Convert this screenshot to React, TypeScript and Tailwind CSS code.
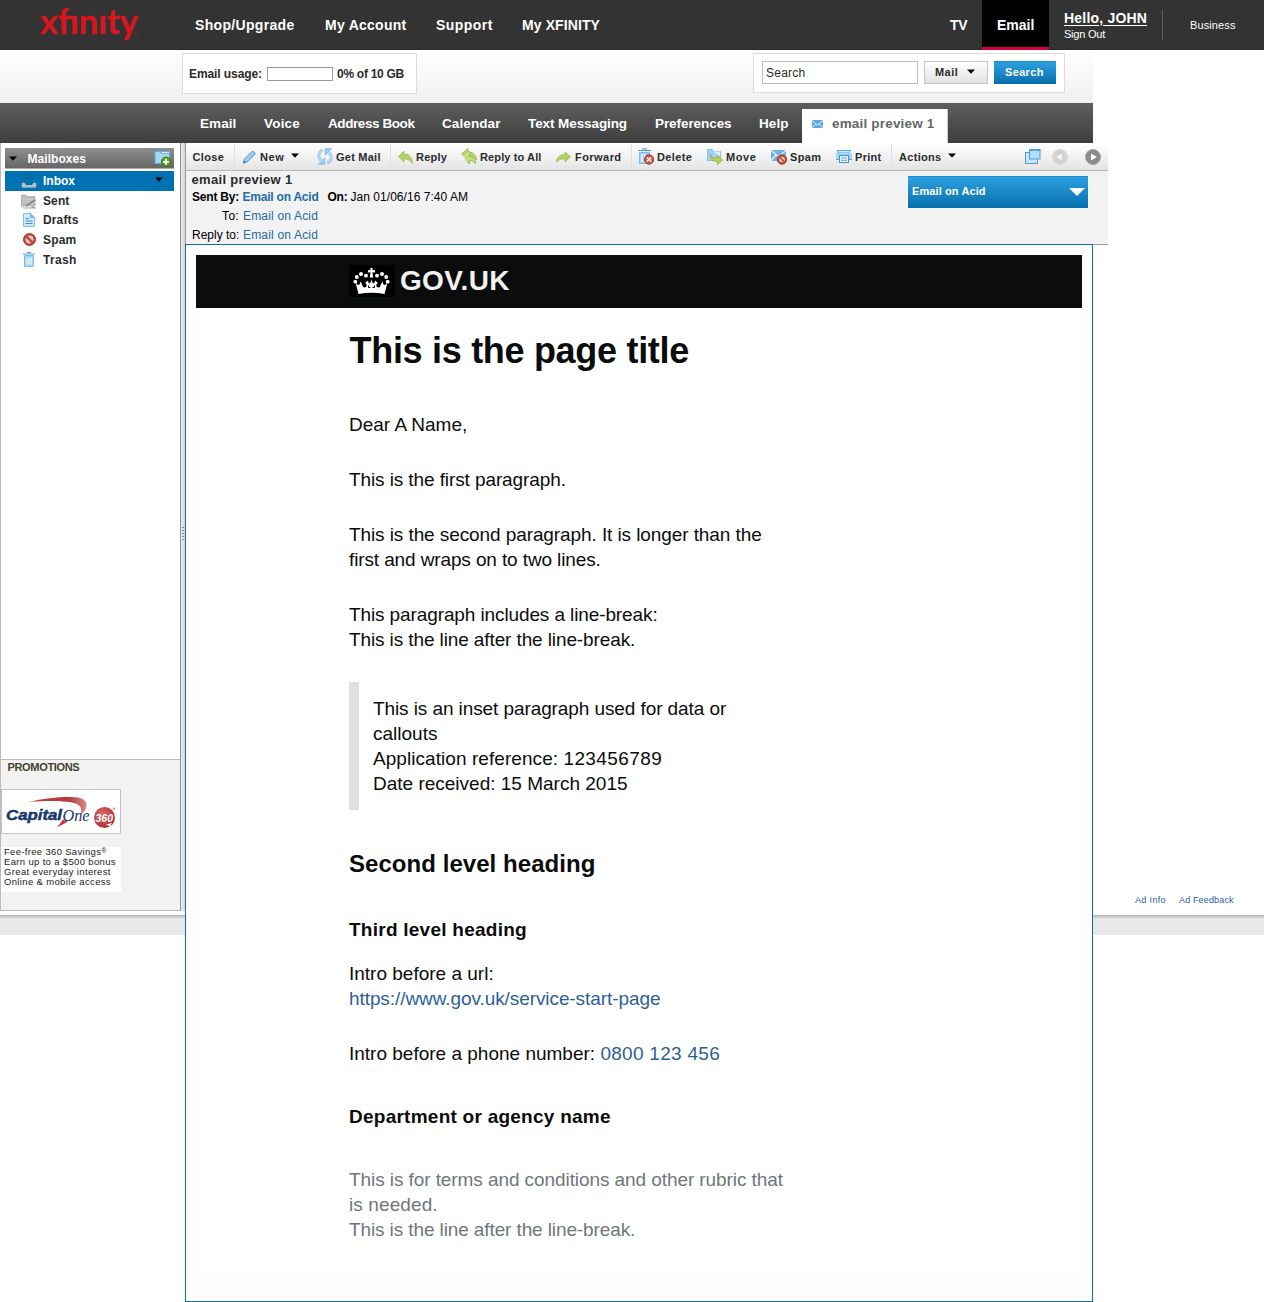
import React from "react";

type IconProps = { className?: string };

function Logo() {
  return (
    <svg width="104" height="46" viewBox="0 0 104 46" aria-label="xfinity" className="block overflow-visible">
      <text x="1" y="31.800" fill="#d8161f" stroke="#d8161f" strokeWidth="0.3" fontFamily="Lato, sans-serif" fontSize="34" textLength="98" lengthAdjust="spacingAndGlyphs">
        xfınıty
      </text>
      <circle cx="97.500" cy="30.800" r="1.600" fill="none" stroke="#8d2227" strokeWidth="1" />
    </svg>
  );
}

function Caret({ className = "" }: IconProps) {
  return (
    <svg width="8" height="5" viewBox="0 0 8 5" className={className}>
      <path d="M0 0.5H8L4 4.8Z" fill="currentColor" />
    </svg>
  );
}

function Envelope() {
  return (
    <svg width="11" height="8" viewBox="0 0 11 8">
      <rect width="11" height="8" fill="#5aa9e6" />
      <path d="M0 0.5L5.5 5L11 0.5M0 7.5L4 3.8M11 7.5L7 3.8" stroke="#e3f2fd" fill="none" />
    </svg>
  );
}

function FolderAdd() {
  return (
    <svg width="18" height="17" viewBox="0 0 18 17">
      <path d="M1 13.500V1.500H6L7.500 3.500H15.500V13.500Z" fill="#a9d6f2" stroke="#5fa9dc" />
      <path d="M7 1.500H15.500V3.500H8Z" fill="#d9eefb" stroke="#5fa9dc" strokeWidth="0.6" />
      <circle cx="12" cy="11.800" r="4.700" fill="#5c9f20" stroke="#3c7312" />
      <path d="M12 8.800V14.800M9 11.800H15" stroke="#fff" strokeWidth="1.700" />
    </svg>
  );
}

function InboxIcon() {
  return (
    <svg width="16" height="14" viewBox="0 0 16 14">
      <path d="M6 0H10V3H13L8 7L3 3H6Z" fill="#0a689f" />
      <path d="M3 7L1 10V13H15V10L13 7" fill="none" stroke="#6f8ea3" />
      <path d="M1 9H4L5 11H11L12 9H15V13.500H1Z" fill="#b4bfc7" />
    </svg>
  );
}

function SentIcon() {
  return (
    <svg width="16" height="17" viewBox="0 0 16 17">
      <path d="M0.500 13V2H5L6.500 3.500H14V13Z" fill="#bdbdbd" stroke="#b5b5b5" />
      <path d="M2 6.500H12M2 9H9" stroke="#cacaca" />
      <path d="M5 13L14 7" stroke="#777" strokeWidth="1.200" />
      <path d="M0 14.500H10L12 13L16 15.500H2Z" fill="#a5a5a5" />
    </svg>
  );
}

function DraftIcon() {
  return (
    <svg width="12" height="14" viewBox="0 0 12 14">
      <path d="M0.500 0.500H7.500L11.500 4.500V13.500H0.500Z" fill="#cfe9fa" stroke="#7dbdeb" />
      <path d="M7.500 0.500V4.500H11.500" fill="#8cc6f0" stroke="#62aee6" />
      <path d="M2.500 5.500H6M2.500 8H9.500M2.500 10.500H9.500" stroke="#3f8fd3" />
    </svg>
  );
}

function Ban({ size = 13 }: { size?: number }) {
  return (
    <svg width={size} height={size} viewBox="0 0 13 13">
      <circle cx="6.500" cy="6.500" r="6" fill="#c4463d" stroke="#a93a34" />
      <circle cx="6.500" cy="6.500" r="3.900" fill="#f3cdc7" />
      <path d="M3.200 3.200L9.800 9.800" stroke="#c4463d" strokeWidth="2.400" />
    </svg>
  );
}

function TrashIcon() {
  return (
    <svg width="12" height="15" viewBox="0 0 12 15">
      <path d="M1.500 3.500H10.500V14.500H1.500Z" fill="#a5d3f4" stroke="#7dbdeb" />
      <path d="M0 2H12" stroke="#5f9fd0" />
      <path d="M4 0.500H8" stroke="#5f9fd0" />
      <path d="M4 5.500V12.500M6.100 5.500V12.500M8.200 5.500V12.500" stroke="#f3faff" strokeWidth="1.100" />
    </svg>
  );
}

function Pencil() {
  return (
    <svg width="13" height="14" viewBox="0 0 13 14">
      <path d="M0.500 13L1.500 9L9.500 1L12.500 3.500L4.500 11.800Z" fill="#8cc4ef" stroke="#5b9fd8" />
      <path d="M3 10L10.500 2.500" stroke="#aed6f5" strokeWidth="1.200" />
      <path d="M0 13.500L1 10.500L3 12.500Z" fill="#376f9f" />
    </svg>
  );
}

function Refresh() {
  return (
    <svg width="16" height="17" viewBox="0 0 16 17">
      <path d="M6 2C1 3.500 0.500 9 4 12.500" fill="none" stroke="#a9d3f1" strokeWidth="3.200" />
      <path d="M1.500 16.200H7.700V10Z" fill="#9fcdf0" stroke="#6ba8d8" strokeWidth="0.600" />
      <path d="M10 15C15 13.500 15.500 8 12 4.500" fill="none" stroke="#a9d3f1" strokeWidth="3.200" />
      <path d="M14.500 0.800H8.300V7Z" fill="#9fcdf0" stroke="#5c9ed6" strokeWidth="0.600" />
    </svg>
  );
}

function ReplyIcon() {
  return (
    <svg width="15" height="14" viewBox="0 0 15 14">
      <path d="M0.500 6.500L6 1V4C11 4 14 7 14.500 13.500C12 10 10 9 6 9V12Z" fill="#b3d264" stroke="#9dbb50" strokeWidth="0.800" />
    </svg>
  );
}

function ReplyAllIcon() {
  return (
    <svg width="16" height="17" viewBox="0 0 16 17">
      <path d="M0.500 6L7 0.500V3.500C12 4 15 7 15.500 12C13 9 11 8 7 8.500V11.500Z" fill="#b9d670" stroke="#93b240" strokeWidth="0.800" />
      <path d="M3 10.500L8.500 5.500V8.200C12.500 8.200 14.500 11 14.500 15.500C12.500 13 11 12.500 8.500 12.500V16Z" fill="#c4de82" stroke="#93b240" strokeWidth="0.800" />
      <path d="M8 4.800L2.500 10L5 12.500" stroke="#fff" fill="none" />
    </svg>
  );
}

function ForwardIcon() {
  return (
    <svg width="15" height="12" viewBox="0 0 15 12">
      <path d="M14.500 5.500L9 1V3.500C4 3.500 1 6 0.500 11C3 8.500 5 7.800 9 7.800V11Z" fill="#b3d264" stroke="#9dbb50" strokeWidth="0.800" />
    </svg>
  );
}

function DeleteIcon() {
  return (
    <svg width="16" height="17" viewBox="0 0 16 17">
      <path d="M1.500 4.500H11.500V15.500H1.500Z" fill="#a5d3f4" stroke="#7dbdeb" />
      <path d="M0 2.500H13" stroke="#4c95d0" />
      <path d="M4 0.800H9" stroke="#4c95d0" />
      <path d="M4 6V14M6.500 6V14" stroke="#f3faff" strokeWidth="1.300" />
      <circle cx="11" cy="11.500" r="4.700" fill="#c9574d" stroke="#a23a34" />
      <path d="M8.800 9.300L13.200 13.700M13.200 9.300L8.800 13.700" stroke="#fbe3e0" strokeWidth="1.700" />
    </svg>
  );
}

function MoveIcon() {
  return (
    <svg width="16" height="17" viewBox="0 0 16 17">
      <path d="M0.500 12.500V1.500H5L6.500 3.500H13.500V12.500Z" fill="#a5d3f4" stroke="#7dbdeb" />
      <path d="M6 3.500L13 3.500L13 9Z" fill="#d9eefb" />
      <path d="M3.500 6C4 9.500 6.500 10.200 10.500 10V7.500L15.700 12L10.500 16.500V13.500C6 13.500 2.500 11 3.500 6Z" fill="#b9d560" stroke="#8cac38" strokeWidth="0.800" />
    </svg>
  );
}

function SpamIcon() {
  return (
    <svg width="16" height="17" viewBox="0 0 16 17">
      <rect y="2" width="15" height="11" fill="#6db1e6" />
      <path d="M0 2.500L7.500 8.500L15 2.500M0 12.500L5 7M9 7L15 12.500" stroke="#e3f2fd" strokeWidth="1.200" fill="none" />
      <circle cx="11" cy="11.500" r="4.700" fill="#c4463d" stroke="#a23a34" />
      <circle cx="11" cy="11.500" r="2.800" fill="#f3cdc7" />
      <path d="M8.500 9L13.500 14" stroke="#c4463d" strokeWidth="1.600" />
    </svg>
  );
}

function PrintIcon() {
  return (
    <svg width="16" height="13" viewBox="0 0 16 13">
      <path d="M1 0.500H14.500L13 3H2.500Z" fill="#d3eafa" stroke="#5ba6e0" />
      <rect x="0" y="3" width="16" height="7" fill="#a9d3f3" />
      <path d="M0 9.500H16" stroke="#5ba6e0" />
      <rect x="3.500" y="5.500" width="9" height="7" fill="#eaf6fe" stroke="#3f8fd3" />
      <path d="M5 8H11M5 10.300H11" stroke="#5ba6e0" />
    </svg>
  );
}

function WindowsIcon() {
  return (
    <svg width="16" height="16" viewBox="0 0 16 16">
      <rect x="0.500" y="3.500" width="12" height="11" fill="#cbe5f7" stroke="#4e9cd8" />
      <rect x="4.500" y="0.500" width="10.500" height="9.500" fill="#b5dcf5" stroke="#4e9cd8" />
      <path d="M4 1.200H15.500" stroke="#4e9cd8" strokeWidth="1.400" />
    </svg>
  );
}

function CircleArrow({ next }: { next?: boolean }) {
  return (
    <svg width="16" height="16" viewBox="0 0 16 16">
      <circle cx="8" cy="8" r="7.500" fill={next ? "#8b8b8f" : "#d2d2d2"} stroke={next ? "#a4a4a8" : "#dadada"} />
      <path d={next ? "M6 4.500V11.500L12 8Z" : "M10 4.500V11.500L4 8Z"} fill={next ? "#fff" : "#f5f5f5"} />
    </svg>
  );
}

function Crown() {
  return (
    <svg width="46" height="32" viewBox="0 0 46 32" className="block bg-black">
      <g fill="#fff">
        <path d="M9.500 29L6.500 17.500C9 21.500 11.500 20 11 16.500C14 19 13 22.500 15.500 22.500C18 22.500 18.500 19 16 18L19 15.500C19.500 19.500 21.500 20 22.500 14C23.500 20 25.500 19.500 26 15.500L29 18C26.500 19 27 22.500 29.500 22.500C32 22.500 31 19 34 16.500C33.500 20 36 21.500 38.500 17.500L35.500 29Q22.500 26.500 9.500 29Z" />
        <path d="M21.300 3H23.700L23.400 5.300L26 5V7.500L23.400 7.200L24.300 12.500H20.700L21.600 7.200L19 7.500V5L21.600 5.300Z" />
        <circle cx="6.300" cy="16.700" r="1.900" />
        <circle cx="7.800" cy="12" r="1.900" />
        <circle cx="12" cy="9" r="2" />
        <circle cx="17" cy="10.700" r="1.900" />
        <circle cx="28" cy="10.700" r="1.900" />
        <circle cx="33" cy="9" r="2" />
        <circle cx="37.200" cy="12" r="1.900" />
        <circle cx="38.700" cy="16.700" r="1.900" />
      </g>
      <path d="M19.500 20.500V22.500H21.500M25.500 20.500V22.500H23.500" stroke="#000" fill="none" />
    </svg>
  );
}

function CapitalOne() {
  return (
    <svg width="118" height="43" viewBox="0 0 118 43" className="block">
      <defs>
        <linearGradient id="swoosh" x1="0" x2="1">
          <stop offset="0" stopColor="#c6383e" />
          <stop offset="0.700" stopColor="#b53a40" />
          <stop offset="1" stopColor="#d58a8d" />
        </linearGradient>
        <radialGradient id="ball" cx="0.400" cy="0.350" r="0.700">
          <stop offset="0" stopColor="#d96a6c" />
          <stop offset="1" stopColor="#b02a33" />
        </radialGradient>
      </defs>
      <path d="M26 12C45 7.500 66 6 76 7.500C88 10 86 19 79 24.500C80 18 79 14.500 70 12.500C60 10.500 45 10.500 26 12Z" fill="url(#swoosh)" />
      <path d="M61 29.500L55 37.500L66 31.500Z" fill="#c6383e" />
      <text x="4" y="29.500" fill="#17386f" stroke="#17386f" strokeWidth="0.500" fontFamily="Liberation Sans, sans-serif" fontWeight="700" fontStyle="italic" fontSize="15.500" textLength="56" lengthAdjust="spacingAndGlyphs">Capital</text>
      <text x="60.500" y="31" fill="#17386f" fontFamily="Liberation Serif, serif" fontStyle="italic" fontSize="17.500" textLength="27" lengthAdjust="spacingAndGlyphs">One</text>
      <circle cx="102.500" cy="27.500" r="10.500" fill="url(#ball)" />
      <text x="93.500" y="31.500" fill="#fff" fontFamily="Liberation Sans, sans-serif" fontWeight="700" fontStyle="italic" fontSize="10.500" textLength="17.500" lengthAdjust="spacingAndGlyphs">360</text>
      <path d="M104 34.500L110 33L108 36.500Z" fill="#fff" />
      <circle cx="112" cy="18.500" r="1" fill="#c87a7d" />
    </svg>
  );
}

function Tool({ w, icon, iconW = "w-[19px]", children, track }: { w: string; icon?: React.ReactNode; iconW?: string; children: React.ReactNode; track: string }) {
  return (
    <div className={`flex shrink-0 items-center ${w}`}>
      {icon && <span className={`flex shrink-0 ${iconW}`}>{icon}</span>}
      <span className={`flex items-center pt-[2px] whitespace-nowrap ${track}`}>{children}</span>
    </div>
  );
}

const Sep = () => <div className="mt-px h-[26px] w-px shrink-0 bg-[#e0e0e0]" />;

function Folder({ h, icon, children, track }: { h: string; icon: React.ReactNode; children: React.ReactNode; track: string }) {
  return (
    <div className={`flex items-center pl-[16px] ${h}`}>
      <span className="flex w-[16px] shrink-0 justify-center">{icon}</span>
      <span className={`ml-[6px] ${track}`}>{children}</span>
    </div>
  );
}

export default function App() {
  return (
    <div className="h-[1302px] w-[1264px] overflow-hidden bg-white font-['Liberation_Sans',Arial,sans-serif] text-[12px] leading-none text-[#2b2b2b]">
      <header className="flex h-[50px] items-center border-b border-[#2a2a2a] bg-[#333] text-[14px] font-bold whitespace-nowrap text-white">
        <div className="ml-[39px] w-[156px]">
          <Logo />
        </div>
        <nav className="flex w-[755px] pt-px">
          <span className="w-[130px] tracking-[0.32px]">Shop/Upgrade</span>
          <span className="w-[111px] tracking-[0.27px]">My Account</span>
          <span className="w-[86px] tracking-[0.45px]">Support</span>
          <span className="tracking-[0.1px]">My XFINITY</span>
        </nav>
        <span className="w-[32px] pt-px tracking-[-0.2px]">TV</span>
        <span className="flex h-[50px] w-[67px] items-center border-b-[3px] border-[#d4003a] bg-black pt-[3px] pl-[15px]">Email</span>
        <div className="ml-[15px] h-[30px] w-[99px] border-r border-[#5c5c5c] pt-px">
          <div className="tracking-[0.2px] underline decoration-1 underline-offset-2">Hello, JOHN</div>
          <div className="mt-[4px] text-[11px] font-normal tracking-[-0.23px]">Sign Out</div>
        </div>
        <span className="ml-[27px] pt-px text-[11px] font-normal tracking-[0.11px]">Business</span>
      </header>

      <div className="flex h-[53px] w-[1093px] items-start bg-linear-to-b from-white to-[#f0f0f0] pt-[3px]">
        <div className="ml-[182px] flex h-[41px] w-[235px] items-center border border-[#dcdcdc] bg-white pl-[6px] font-bold whitespace-nowrap">
          <span className="w-[78px] tracking-[-0.09px]">Email usage:</span>
          <span className="mr-[4px] h-[14px] w-[66px] border border-[#999]" />
          <span className="tracking-[-0.28px]">0% of 10 GB</span>
        </div>
        <div className="ml-[336px] flex h-[40px] w-[312px] items-start border border-[#dcdcdc] bg-white pt-[7px] pl-[8px]">
          <span className="flex h-[23px] w-[156px] items-center border border-[#bbb] pl-[3px] tracking-[0.24px]">Search</span>
          <span className="ml-[6px] flex h-[23px] w-[64px] items-center border border-[#c4c4c4] bg-linear-to-b from-white to-[#e2e2e2] pl-[10px] text-[11px] font-bold tracking-[0.45px]">
            Mail
            <Caret className="mb-[2px] ml-[9px] text-black" />
          </span>
          <span className="ml-[6px] flex h-[23px] w-[62px] items-center border-t border-[#1e8bcb] bg-linear-to-b from-[#2ba0e0] to-[#066fae] pb-px pl-[11px] text-[11px] font-bold tracking-[0.34px] text-white">Search</span>
        </div>
      </div>

      <nav className="flex h-[40px] w-[1093px] bg-linear-to-b from-[#5e5e5e] to-[#3e3e3e] pl-[200px] text-[13.5px] leading-[42px] font-bold whitespace-nowrap text-white">
        <span className="w-[64px] tracking-[0.08px]">Email</span>
        <span className="w-[64px] tracking-[0.2px]">Voice</span>
        <span className="w-[114px] tracking-[-0.42px]">Address Book</span>
        <span className="w-[86px] tracking-[0.09px]">Calendar</span>
        <span className="w-[127px] tracking-[-0.09px]">Text Messaging</span>
        <span className="w-[104px] tracking-[-0.07px]">Preferences</span>
        <span className="w-[43px] tracking-[0.07px]">Help</span>
        <span className="mt-[6px] flex h-[34px] w-[146px] items-center border-r border-[#ccc] bg-white pb-[4px] pl-[10px] tracking-[0.18px] text-[#666]">
          <Envelope />
          <span className="ml-[9px]">email preview 1</span>
        </span>
      </nav>

      <div className="flex">
        <aside className="w-[185px] shrink-0">
          <div className="flex">
            <div className="flex h-[768px] w-[181px] flex-col border-r border-b border-l border-[#bbb] border-r-[#8e8e8e] bg-white">
              <div className="mt-[5px] ml-[4px] w-[169px] font-bold">
                <div className="flex h-[21px] items-center border-b border-[#aaa] bg-linear-to-b from-[#8f8f8f] to-[#666] pl-[4px] tracking-[0.05px] text-white">
                  <Caret className="text-black" />
                  <span className="ml-[10.5px] w-[126px] pt-px">Mailboxes</span>
                  <FolderAdd />
                </div>
                <div className="mt-[2px] flex h-[20px] items-center bg-[#0072b1] pl-[16px] text-white">
                  <span className="flex w-[16px] justify-center"><InboxIcon /></span>
                  <span className="ml-[6px] w-[112px]">Inbox</span>
                  <Caret className="mb-[4px] text-black" />
                </div>
                <Folder h="h-[20px]" icon={<SentIcon />} track="tracking-[0.12px]">Sent</Folder>
                <Folder h="h-[18px]" icon={<DraftIcon />} track="tracking-[0.14px]">Drafts</Folder>
                <Folder h="h-[21px]" icon={<Ban />} track="tracking-[0.2px]">Spam</Folder>
                <Folder h="h-[19px]" icon={<TrashIcon />} track="tracking-[0.3px]">Trash</Folder>
              </div>
              <div className="mt-auto h-[151px] border-t border-[#bbb] bg-[#f2f2f2]">
                <div className="mt-[2px] ml-[6.500px] text-[11px] font-bold tracking-[-0.33px] text-[#42422f]">PROMOTIONS</div>
                <div className="mt-[16px] h-[45px] w-[120px] border border-[#c4c4c4] bg-white">
                  <CapitalOne />
                </div>
                <div className="mt-[13px] h-[45px] w-[120px] bg-white pl-[3px] text-[9.5px] leading-[10px] whitespace-nowrap text-[#222]">
                  <div className="h-[10px] tracking-[0.32px]">Fee-free 360 Savings<span className="align-[2px] text-[7px] leading-none">®</span></div>
                  <div className="tracking-[0.34px]">Earn up to a $500 bonus</div>
                  <div className="tracking-[0.35px]">Great everyday interest</div>
                  <div className="tracking-[0.35px]">Online &amp; mobile access</div>
                </div>
              </div>
            </div>
            <div className="flex h-[768px] w-[4px] flex-col items-center justify-center gap-[2px] bg-linear-to-r from-[#eee] to-[#d4d4d4] pt-[12px]">
              {[0, 1, 2, 3, 4].map((i) => (
                <i key={i} className="h-px w-[2px] bg-[#888]" />
              ))}
            </div>
          </div>
          <div className="mt-[4px] h-[20px] bg-linear-to-b from-[#b4b4b4] via-[#e8e8e8] via-20% to-[#e8e8e8]" />
        </aside>

        <main className="w-[908px] shrink-0">
          <div className="h-[102px] w-[923px] border-b border-l border-[#999] bg-[#f2f2f2]">
            <div className="flex h-[28px] items-center border-b border-[#b5b5b5] bg-linear-to-b from-white to-[#e4e4e4] pl-[6.500px] text-[11px] font-bold">
              <Tool w="w-[41.500px]" track="tracking-[0.36px]">Close</Tool>
              <Sep />
              <div className="w-[8px]" />
              <Tool w="w-[74px]" icon={<Pencil />} iconW="w-[17px]" track="tracking-[0.6px]">
                New<Caret className="mb-[4px] ml-[6.500px] text-black" />
              </Tool>
              <Tool w="w-[73px]" icon={<Refresh />} track="tracking-[0.24px]">Get Mail</Tool>
              <Sep />
              <div className="w-[7px]" />
              <Tool w="w-[63px]" icon={<ReplyIcon />} iconW="w-[18px]" track="tracking-[0.25px]">Reply</Tool>
              <Tool w="w-[95px]" icon={<ReplyAllIcon />} track="tracking-[0.12px]">Reply to All</Tool>
              <Tool w="w-[75px]" icon={<ForwardIcon />} track="tracking-[0.45px]">Forward</Tool>
              <Sep />
              <div className="w-[6px]" />
              <Tool w="w-[69px]" icon={<DeleteIcon />} track="tracking-[0.38px]">Delete</Tool>
              <Tool w="w-[64px]" icon={<MoveIcon />} track="tracking-[0.55px]">Move</Tool>
              <Tool w="w-[65px]" icon={<SpamIcon />} track="tracking-[0.4px]">Spam</Tool>
              <Tool w="w-[55px]" icon={<PrintIcon />} track="tracking-[0.3px]">Print</Tool>
              <Sep />
              <div className="w-[7px]" />
              <Tool w="w-[126px]" track="tracking-[0.31px]">
                Actions<Caret className="mb-[4px] ml-[6px] text-black" />
              </Tool>
              <span className="w-[27px]"><WindowsIcon /></span>
              <span className="w-[33px]"><CircleArrow /></span>
              <CircleArrow next />
            </div>
            <div className="flex pl-[6px] whitespace-nowrap">
              <div className="w-[716px]">
                <div className="mt-[2px] -ml-[0.500px] text-[13px] font-bold tracking-[0.33px]">email preview 1</div>
                <div className="mt-[5px] flex font-bold text-black">
                  <span className="w-[50.500px] tracking-[-0.2px]">Sent By:</span>
                  <span className="w-[85px] tracking-[-0.22px] text-[#256c9f]">Email on Acid</span>
                  <span className="w-[23px] tracking-[-0.22px]">On:</span>
                  <span className="font-normal tracking-[0.04px]">Jan 01/06/16 7:40 AM</span>
                </div>
                <div className="mt-[7px] flex text-black">
                  <span className="w-[47px] text-right tracking-[0.3px]">To:</span>
                  <span className="ml-[4px] tracking-[0.18px] text-[#256c9f]">Email on Acid</span>
                </div>
                <div className="mt-[7px] flex text-black">
                  <span className="w-[47px] text-right">Reply to:</span>
                  <span className="ml-[4px] tracking-[0.18px] text-[#256c9f]">Email on Acid</span>
                </div>
              </div>
              <div className="mt-[5px] flex h-[32px] w-[180px] items-center justify-between border-t border-[#1e8bcb] bg-linear-to-b from-[#2ba0e0] to-[#066fae] pr-[3px] pl-[4px] text-[11px] font-bold tracking-[0.1px] text-white">
                <span className="pb-[2px]">Email on Acid</span>
                <svg width="16" height="8" viewBox="0 0 16 8" className="mb-px"><path d="M0 0H16L8 8Z" fill="#fff" /></svg>
              </div>
            </div>
          </div>

          <div className="-mt-px h-[1058px] w-[908px] border border-[#0b6fa4] bg-[#fdfdfd] px-[10px] pt-[10px]">
            <article className="h-[1017px] w-[886px] bg-white text-[19px] leading-[25px] whitespace-nowrap text-[#0b0c0c]">
              <div className="flex h-[53px] bg-[#0b0c0c] pl-[153px]">
                <div className="mt-[10px]"><Crown /></div>
                <span className="ml-[5px] pt-[10px] text-[28px] leading-[32px] font-bold tracking-[0.3px] text-[#f1f1f1]">GOV.UK</span>
              </div>
              <div className="ml-[153px] w-[433px] pt-[24px]">
                <h1 className="ml-[0.500px] text-[36px] leading-[38px] font-bold tracking-[-0.3px]">This is the page title</h1>
                <p className="mt-[42px]">Dear A Name,</p>
                <p className="mt-[30px] tracking-[-0.1px]">This is the first paragraph.</p>
                <p className="mt-[30px] tracking-[-0.09px]">
                  This is the second paragraph. It is longer than the
                  <br />
                  <span className="tracking-[-0.12px]">first and wraps on to two lines.</span>
                </p>
                <p className="mt-[30px] tracking-[-0.11px]">
                  This paragraph includes a line-break:
                  <br />
                  This is the line after the line-break.
                </p>
                <div className="mt-[30px] border-l-[10px] border-[#dee0e2] py-[14px] pl-[14px]">
                  <span className="tracking-[-0.09px]">This is an inset paragraph used for data or</span>
                  <br />
                  callouts
                  <br />
                  <span className="tracking-[0.06px]">Application reference: </span>
                  <span className="tracking-[0.4px]">123456789</span>
                  <br />
                  Date received: 15 March 2015
                </div>
                <h2 className="mt-[39px] text-[24px] leading-[30px] font-bold tracking-[0.05px]">Second level heading</h2>
                <h3 className="mt-[38px] font-bold tracking-[0.25px]">Third level heading</h3>
                <p className="mt-[19px]">
                  Intro before a url:
                  <br />
                  <span className="tracking-[-0.08px] text-[#2e5f94]">https://www.gov.uk/service-start-page</span>
                </p>
                <p className="mt-[30px]">
                  Intro before a phone number: <span className="tracking-[0.28px] text-[#2e5f94]">0800 123 456</span>
                </p>
                <h3 className="mt-[38px] font-bold tracking-[0.25px]">Department or agency name</h3>
                <p className="mt-[38px] tracking-[-0.08px] text-[#6f777b]">
                  This is for terms and conditions and other rubric that
                  <br />
                  <span className="tracking-[0.1px]">is needed.</span>
                  <br />
                  <span className="tracking-[-0.11px]">This is the line after the line-break.</span>
                </p>
              </div>
            </article>
          </div>
        </main>

        <aside className="w-[171px] pt-[753px]">
          <div className="flex h-[19px] pl-[42px] text-[9px] whitespace-nowrap text-[#1f5fa5]">
            <span className="w-[44px] tracking-[0.35px]">Ad Info</span>
            <span className="tracking-[0.15px]">Ad Feedback</span>
          </div>
          <div className="h-[20px] bg-linear-to-b from-[#b4b4b4] via-[#e8e8e8] via-20% to-[#e8e8e8]" />
        </aside>
      </div>
    </div>
  );
}
